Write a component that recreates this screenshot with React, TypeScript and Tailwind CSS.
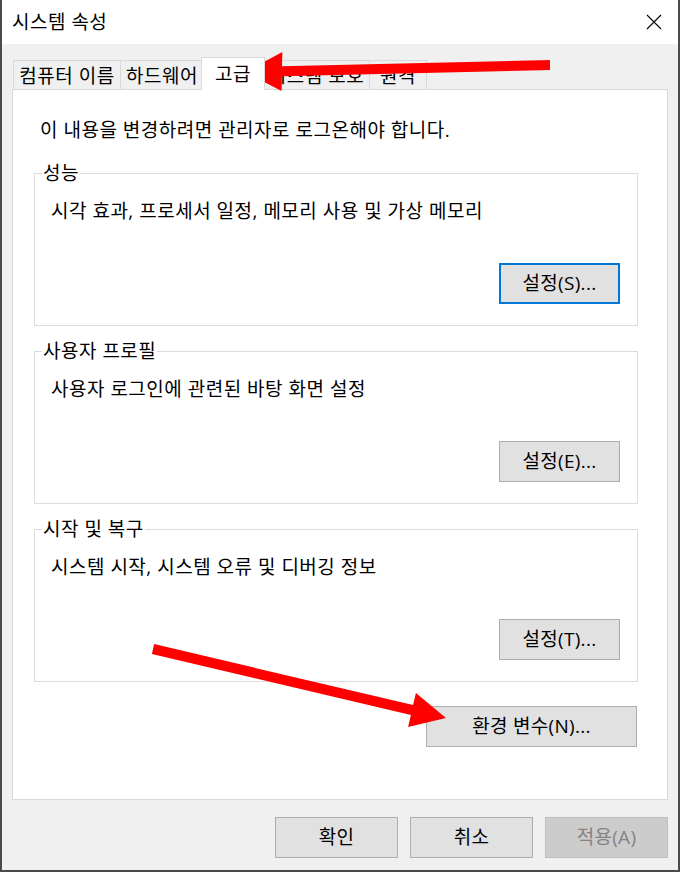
import React from 'react';

const tabs = [
  { label: '컴퓨터 이름', w: 'w-[107px]' },
  { label: '하드웨어', w: 'w-[83px]' },
  { label: '고급', w: 'w-[64px]', active: true },
  { label: '시스템 보호', w: 'w-[106px]' },
  { label: '원격', w: 'w-[58px]' },
];

const groups = [
  { title: '성능', text: '시각 효과, 프로세서 일정, 메모리 사용 및 가상 메모리', btn: '설정(S)...', focused: true },
  { title: '사용자 프로필', text: '사용자 로그인에 관련된 바탕 화면 설정', btn: '설정(E)...' },
  { title: '시작 및 복구', text: '시스템 시작, 시스템 오류 및 디버깅 정보', btn: '설정(T)...' },
];

function Button({ children, focused, disabled, className = '' }: { children: React.ReactNode; focused?: boolean; disabled?: boolean; className?: string }) {
  const look = focused
    ? 'border-2 border-[#0078d7] bg-[#e1e1e1] text-black'
    : disabled
      ? 'border border-[#bfbfbf] bg-[#cccccc] text-[#838383]'
      : 'border border-[#adadad] bg-[#e1e1e1] text-black';
  return (
    <div className={`flex h-[41px] items-center justify-center text-[19px] tracking-[0.3px] ${look} ${className}`}>
      {children}
    </div>
  );
}

function GroupBox({ title, text, btn, focused }: { title: string; text: string; btn: string; focused?: boolean }) {
  return (
    <div className="relative h-[153px] w-[604px] border border-[#dcdcdc]">
      {/* legend sits on the top border */}
      <span className="absolute left-[7px] top-[-14px] bg-white px-[1px] text-[19px] leading-[26px] tracking-[0.5px]">{title}</span>
      <div className="pl-[16px] pt-[24px] text-[19px] leading-[26px] tracking-[0.5px]">{text}</div>
      <div className="mt-[39px] flex justify-end pr-[17px]">
        <Button focused={focused} className="w-[121px]">{btn}</Button>
      </div>
    </div>
  );
}

function Arrows() {
  return (
    <svg className="pointer-events-none absolute inset-0" width="680" height="872" viewBox="0 0 680 872">
      <polygon
        fill="#ff0000"
        points="548,60 280,66.2 280.4,52 243,72 279.6,91 279.9,76.2 548,70"
      />
      <polygon
        fill="#ff0000"
        points="152.1,644.1 411.1,705.1 413.9,693 444,718 406.1,727 408.9,714.9 149.9,653.9"
      />
    </svg>
  );
}

export default function App() {
  return (
    <div
      className="relative flex h-[872px] w-[680px] flex-col border-x-2 border-b-2 border-[#4a4a4a] bg-[#f0f0f0] text-black"
      style={{ fontFamily: '"Open Sans", "Noto Sans CJK KR", sans-serif' }}
    >
      {/* 제목 표시줄 */}
      <div className="flex h-[44px] items-center justify-between bg-white pl-[10px] pr-[16px]">
        <span className="text-[19px] tracking-[0.5px]">시스템 속성</span>
        <svg width="16" height="16" viewBox="0 0 16 16">
          <path d="M1 1L15 15M15 1L1 15" stroke="#000" strokeWidth="1.1" />
        </svg>
      </div>

      {/* 탭 */}
      <div className="flex h-[45px] items-end pl-[11px]">
        {tabs.map((t) =>
          t.active ? (
            <div
              key={t.label}
              className={`relative z-10 -mx-[2px] -mb-px flex h-[33px] items-center justify-center border border-b-0 border-[#d9d9d9] bg-white pt-[1px] text-[19px] tracking-[0.5px] ${t.w}`}
            >
              {t.label}
            </div>
          ) : (
            <div
              key={t.label}
              className={`flex h-[29px] items-center justify-center border border-b-0 border-r-0 border-[#d9d9d9] pt-[2px] text-[19px] tracking-[0.5px] last:border-r ${t.w}`}
            >
              {t.label}
            </div>
          )
        )}
      </div>

      {/* 탭 내용 */}
      <div className="ml-[10px] flex h-[711px] w-[656px] flex-col border border-[#d9d9d9] bg-white pl-[21px]">
        <div className="pl-[6px] pt-[27px] text-[19px] leading-[26px] tracking-[0.5px]">이 내용을 변경하려면 관리자로 로그온해야 합니다.</div>
        <div className="mt-[30px] flex flex-col gap-[25px]">
          {groups.map((g) => (
            <GroupBox key={g.title} {...g} />
          ))}
        </div>
        <div className="mt-[24px] flex w-[604px] justify-end pr-px">
          <Button className="w-[211px]">환경 변수(N)...</Button>
        </div>
      </div>

      {/* 하단 버튼 */}
      <div className="mt-[17px] flex justify-end gap-[12px] pr-[10px]">
        <Button className="w-[123px]">확인</Button>
        <Button className="w-[123px]">취소</Button>
        <Button disabled className="w-[123px]">적용(A)</Button>
      </div>

      <Arrows />
    </div>
  );
}
